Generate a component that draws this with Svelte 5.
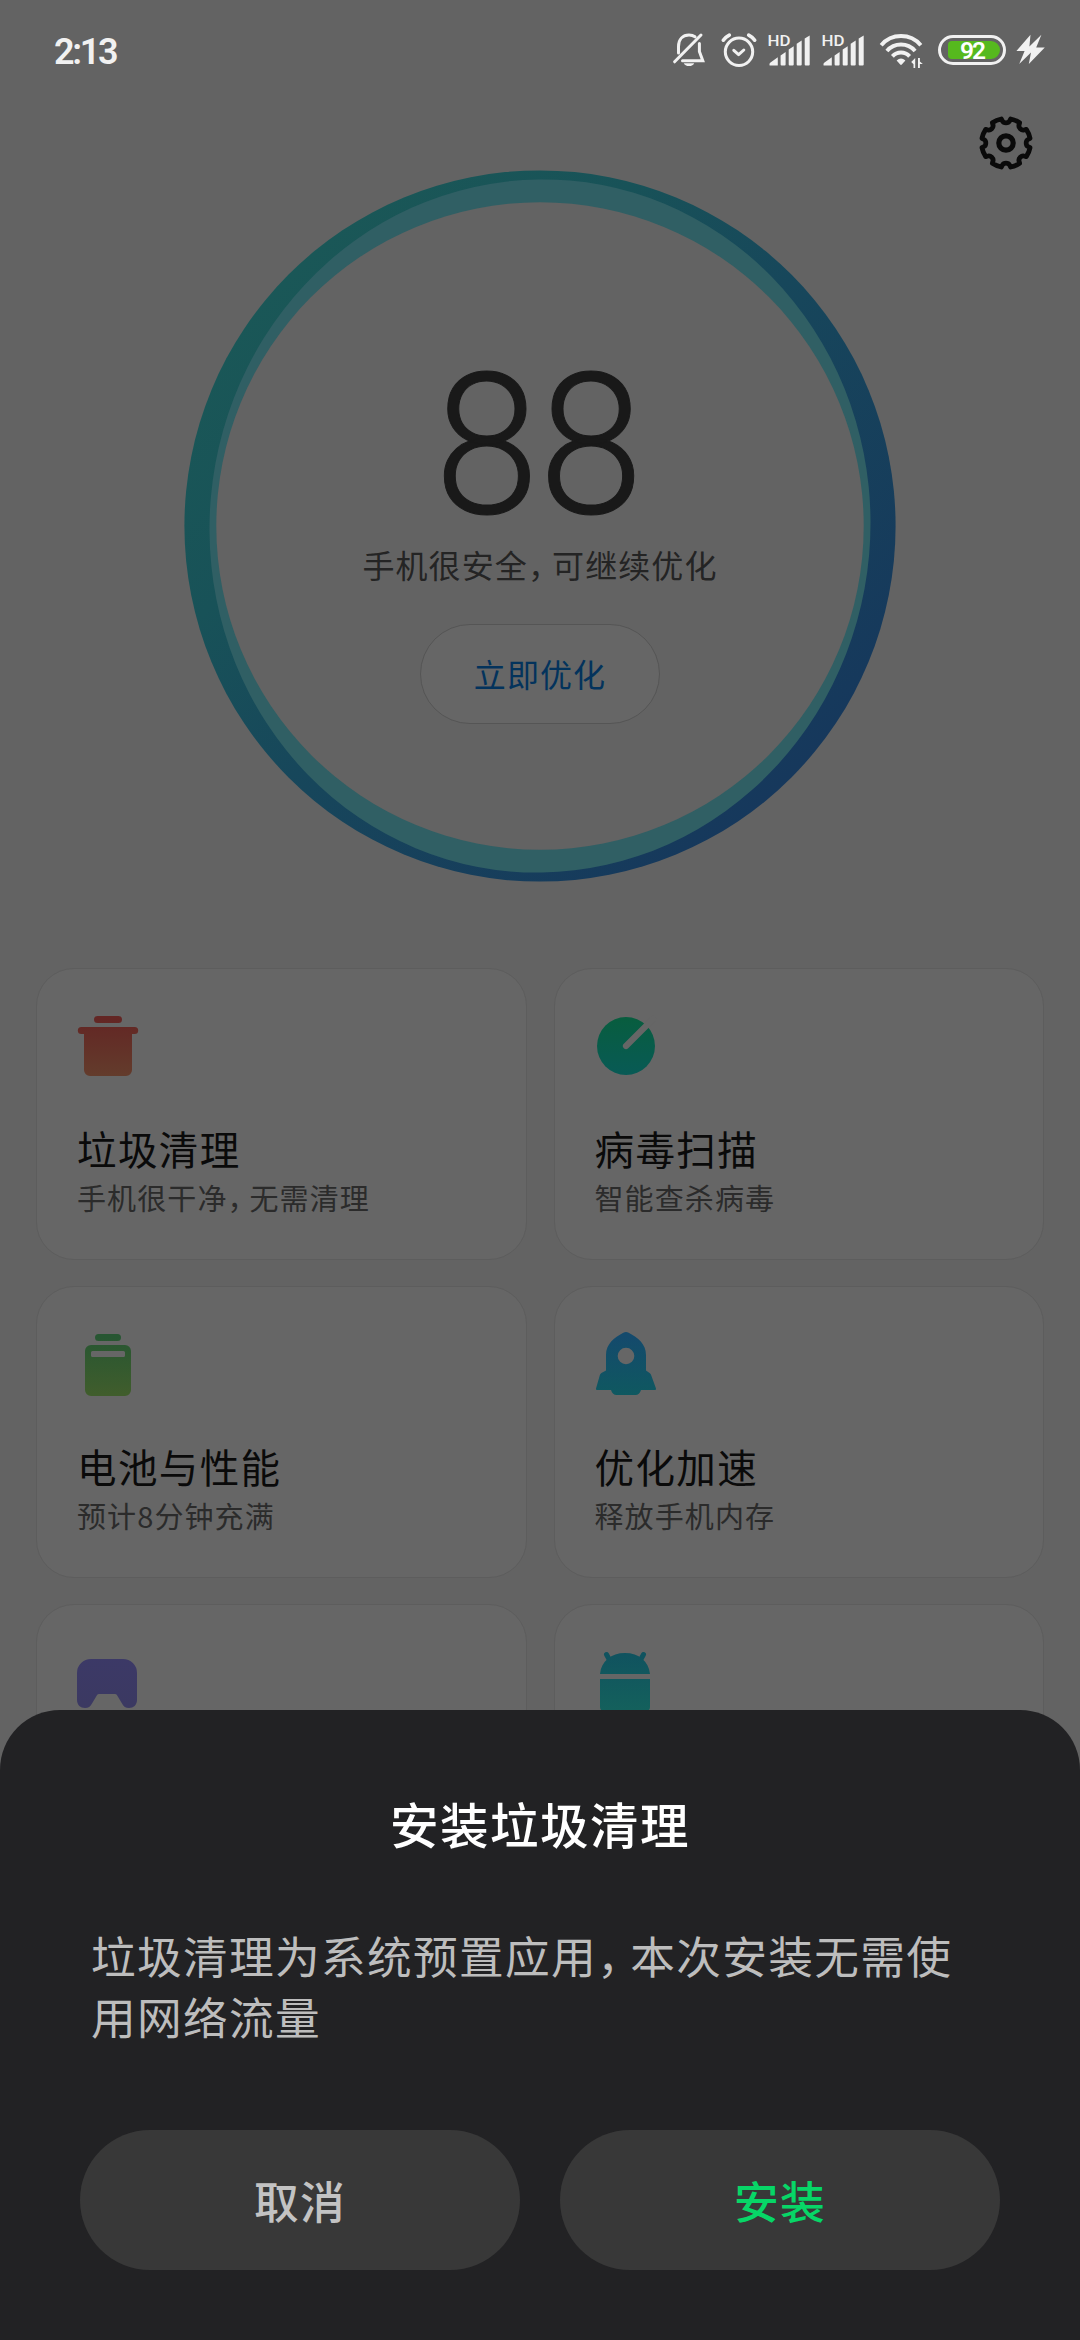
<script>
  const cards = [
    { icon: 'trash', title: '垃圾清理', note: '手机很干净\uFF0C无需清理' },
    { icon: 'scan', title: '病毒扫描', note: '智能查杀病毒' },
    { icon: 'battery', title: '电池与性能', note: '预计8分钟充满' },
    { icon: 'rocket', title: '优化加速', note: '释放手机内存' },
    { icon: 'game', title: '', note: '' },
    { icon: 'android', title: '', note: '' }
  ];

  const gradients = [
    ['trash', '#632624', '#633c2c'],
    ['scan', '#085d3f', '#085a56'],
    ['battery', '#275632', '#405d2c'],
    ['rocket', '#144a6c', '#0f5860'],
    ['game', '#3c3967', '#3b3961'],
    ['android', '#10535f', '#14615c']
  ];

  // Gear outline: eight arcs joined by small rounded notches.
  function gearPath() {
    const at = (deg, x, y) => {
      const a = (deg * Math.PI) / 180;
      const px = x * Math.cos(a) - y * Math.sin(a);
      const py = x * Math.sin(a) + y * Math.cos(a);
      return `${px.toFixed(2)} ${py.toFixed(2)}`;
    };
    let d = '';
    for (let i = 0; i < 8; i++) {
      const k = i * 45;
      d += i === 0 ? `M${at(k, -4.7, -24)}` : `A24.4 24.4 0 0 1 ${at(k, -4.7, -24)}`;
      d += `L${at(k, -3.5, -21.9)}Q${at(k, -2.6, -20.2)} ${at(k, 0, -20.2)}`;
      d += `Q${at(k, 2.6, -20.2)} ${at(k, 3.5, -21.9)}L${at(k, 4.7, -24)}`;
    }
    return d + `A24.4 24.4 0 0 1 ${at(0, -4.7, -24)}Z`;
  }
</script>

{#snippet phrase(text)}{#each text.split('\uFF0C') as part, i}{#if i}<span class="comma">{'\uFF0C'}</span>{/if}{part}{/each}{/snippet}

{#snippet signal()}
  <svg class="signal" width="44" height="36" viewBox="0 0 44 36">
    <text x="-0.5" y="14" textLength="23" lengthAdjust="spacingAndGlyphs">HD</text>
    <path d="M1.5 33.2V32Q1.5 31 2.5 30.5L9.8 25.2V33.2Q9.8 33.5 9.3 33.5H1.8Z" />
    <path d="M12.6 23.4L17.6 20V32.5Q17.6 33.5 16.6 33.5H13.6Q12.6 33.5 12.6 32.5Z" />
    <path d="M20.7 17.6L25.7 14.2V32.5Q25.7 33.5 24.7 33.5H21.7Q20.7 33.5 20.7 32.5Z" />
    <path d="M28.7 11.8L33.7 8.4V32.5Q33.7 33.5 32.7 33.5H29.7Q28.7 33.5 28.7 32.5Z" />
    <path d="M36.7 6.4L41.7 3.4V32.5Q41.7 33.5 40.7 33.5H37.7Q36.7 33.5 36.7 32.5Z" />
  </svg>
{/snippet}

<div class="screen">
  <svg class="defs" width="0" height="0" aria-hidden="true">
    <defs>
      {#each gradients as [id, from, to]}
        <linearGradient id={'g-' + id} x1="0" y1="0" x2="0" y2="68" gradientUnits="userSpaceOnUse">
          <stop offset="0.1" stop-color={from} />
          <stop offset="0.95" stop-color={to} />
        </linearGradient>
      {/each}
    </defs>
  </svg>

  <header class="status">
    <span class="time">2:13</span>
    <div class="tray">
      <svg width="36" height="38" viewBox="0 0 36 38">
        <g fill="none" stroke="#f1f1f1" stroke-width="3" stroke-linecap="round" stroke-linejoin="round">
          <path d="M3.6 30.8L30 4" />
          <path d="M7.5 22V15.5C7.5 8 12 4 18 4C20.4 4 22.4 4.6 24 5.8" />
          <path d="M28.4 12.5V20.5L31.8 29.8H11.5" stroke-linejoin="miter" />
        </g>
        <path d="M12.8 32.2H23.2Q22 35 18 35Q14 35 12.8 32.2Z" fill="#f1f1f1" />
      </svg>
      <svg class="alarm" width="38" height="38" viewBox="0 0 38 38">
        <g fill="none" stroke="#f1f1f1" stroke-width="3" stroke-linecap="round" stroke-linejoin="round">
          <circle cx="19" cy="20.8" r="13.7" />
          <path d="M3.3 9.2Q5.5 6 9.3 4.1M34.7 9.2Q32.5 6 28.7 4.1" stroke-width="3.6" />
          <path d="M13.8 19.3L18.6 23.6L23.8 19" />
        </g>
      </svg>
      {@render signal()}
      {@render signal()}
      <svg class="wifi" width="46" height="38" viewBox="0 0 46 38">
        <g fill="none" stroke="#f1f1f1" stroke-width="3.9">
          <path d="M2.2 14.2A26 26 0 0 1 41.8 14.2" />
          <path d="M7.9 19.9A18.6 18.6 0 0 1 36.1 19.9" />
          <path d="M13.4 25.4A11.5 11.5 0 0 1 30.6 25.4" />
        </g>
        <path d="M17.6 29.6Q22 25.6 26.4 29.6L22.8 33.6Q22 34.3 21.2 33.6Z" fill="#f1f1f1" />
        <path d="M36.2 27V37H34.5V33.2L32.2 31ZM39 37V27H40.9V30.6L43.8 33H40.9V37Z" fill="#f1f1f1" />
      </svg>
      <div class="battery"><div class="charge">92</div></div>
      <svg class="bolt" width="30" height="32" viewBox="0 0 30 32">
        <path d="M14.5 0.8L0.4 17H8.6L3.2 30L15 18.6L12.8 30L28.8 13.6H20.2L25.4 0.8L13.4 12.4Z" fill="#f1f1f1" />
      </svg>
    </div>
  </header>

  <div class="toolbar">
    <svg width="56" height="56" viewBox="-28 -28 56 56" fill="none" stroke="#0a0a0a">
      <path d={gearPath()} stroke-width="4.8" stroke-linejoin="round" />
      <circle r="7.2" stroke-width="5.2" />
    </svg>
  </div>

  <section class="score">
    <svg class="ring" width="712" height="712" viewBox="-356 -356 712 712">
      <linearGradient id="ring" x1="-250" y1="-250" x2="250" y2="250" gradientUnits="userSpaceOnUse">
        <stop offset="0" stop-color="#1a5757" />
        <stop offset="0.25" stop-color="#185258" />
        <stop offset="0.5" stop-color="#17475b" />
        <stop offset="1" stop-color="#16385c" />
      </linearGradient>
      <circle r="355.6" fill="url(#ring)" />
      <ellipse rx="330.4" ry="346.7" transform="rotate(5)" fill="#305f64" />
      <circle r="323.7" fill="#636363" />
    </svg>
    <div class="summary">
      <div class="number">88</div>
      <div class="state">{@render phrase('手机很安全\uFF0C可继续优化')}</div>
      <button class="optimize">立即优化</button>
    </div>
  </section>

  <main class="grid">
    {#each cards as card}
      <article class="card">
        <svg class="icon" width="62" height="70" viewBox="0 0 62 70" fill={`url(#g-${card.icon})`}>
          {#if card.icon === 'trash'}
            <path d="M20.5 4H41.5A3.5 3.5 0 0 1 41.5 11H20.5A3.5 3.5 0 0 1 20.5 4Z" />
            <path d="M4.3 15H57.7A3.5 3.5 0 0 1 57.7 22H55V58A6 6 0 0 1 49 64H13A6 6 0 0 1 7 58V22H4.3A3.5 3.5 0 0 1 4.3 15Z" />
          {:else if card.icon === 'scan'}
            <circle cx="31" cy="34" r="29" />
            <path d="M31 34L58 7" stroke="#666" stroke-width="6.2" stroke-linecap="round" />
          {:else if card.icon === 'battery'}
            <path d="M21.5 4H40.5A3.5 3.5 0 0 1 40.5 11H21.5A3.5 3.5 0 0 1 21.5 4Z" />
            <path fill-rule="evenodd" d="M14 15H48A6 6 0 0 1 54 21V60A6 6 0 0 1 48 66H14A6 6 0 0 1 8 60V21A6 6 0 0 1 14 15ZM15.5 21A1.5 1.5 0 0 0 14 22.5V25.5A1.5 1.5 0 0 0 15.5 27H46.5A1.5 1.5 0 0 0 48 25.5V22.5A1.5 1.5 0 0 0 46.5 21Z" />
          {:else if card.icon === 'rocket'}
            <path fill-rule="evenodd" d="M28.3 2.8Q31 1.4 33.7 2.8C43 7.8 51 14 51 25V40.4L54.6 43Q55.8 43.8 56.2 45.2L61 58.4Q61.4 60 59.8 60H46C45 63.4 43 65 40.5 65H21.5C19 65 17 63.4 16 60H2.2Q.6 60 1 58.4L4.8 45.2Q5.2 43.8 6.4 43L11 40.4V25C11 14 19 7.8 28.3 2.8ZM31 17.7A8.3 8.3 0 1 0 31 34.3A8.3 8.3 0 1 0 31 17.7Z" />
          {:else if card.icon === 'game'}
            <path d="M14 11H46A14 14 0 0 1 60 25V52C60 57 56.5 60 52 60C48.5 60 46.6 58.4 45 55.4L40.2 47.4Q39.4 46 37.8 46H22.2Q20.6 46 19.8 47.4L15 55.4C13.4 58.4 11.5 60 8 60C3.5 60 0 57 0 52V25A14 14 0 0 1 14 11Z" />
          {:else}
            <path d="M11.5 6.5L14.5 12M48.5 6.5L45.5 12" stroke="#10535f" stroke-width="5" stroke-linecap="round" />
            <path d="M5 26C6.4 13 16 5 30 5S53.6 13 55 26ZM5 31H55V59A4 4 0 0 1 51 63H9A4 4 0 0 1 5 59Z" />
          {/if}
        </svg>
        <h2>{card.title}</h2>
        <p>{@render phrase(card.note)}</p>
      </article>
    {/each}
  </main>

  <div class="sheet" role="dialog">
    <h1>安装垃圾清理</h1>
    <p class="message">{@render phrase('垃圾清理为系统预置应用\uFF0C本次安装无需使用网络流量')}</p>
    <div class="actions">
      <button>取消</button>
      <button class="confirm">安装</button>
    </div>
  </div>
</div>

<style>
  :global(body) {
    margin: 0;
    background: #636363;
  }
  .screen {
    position: relative;
    width: 1080px;
    height: 2340px;
    overflow: hidden;
    background: #636363;
    font-family: 'Noto Sans CJK SC', sans-serif;
    display: flex;
    flex-direction: column;
  }
  svg {
    display: block;
    flex: none;
  }
  .defs {
    position: absolute;
  }
  h1, h2, p {
    margin: 0;
    font-weight: 400;
  }
  button {
    font: inherit;
    border: 0;
    padding: 0;
  }
  .comma {
    font-feature-settings: 'halt';
    margin-right: 0.22em;
  }

  .status {
    height: 100px;
    box-sizing: border-box;
    padding: 0 34px 0 54px;
    display: flex;
    align-items: center;
    justify-content: space-between;
    color: #f1f1f1;
    font-family: Roboto, sans-serif;
  }
  .time {
    padding-top: 3px;
    font-size: 36px;
    font-weight: 600;
    letter-spacing: -2.3px;
    line-height: 40px;
  }
  .tray {
    display: flex;
    align-items: center;
  }
  .alarm {
    margin: 0 10px 0 13px;
  }
  .signal {
    margin-right: 10px;
    fill: #f1f1f1;
    font: 500 15.5px Roboto, sans-serif;
  }
  .wifi {
    margin-left: 3px;
  }
  .battery {
    box-sizing: border-box;
    width: 68px;
    height: 30px;
    margin: 0 10px 0 13px;
    border: 3px solid #f1f1f1;
    border-radius: 15px;
    padding: 3px 3px 3px 7px;
  }
  .charge {
    box-sizing: border-box;
    height: 18px;
    border-radius: 4px 9px 9px 4px;
    background: #56b91e;
    color: #fff;
    font-size: 24.5px;
    font-weight: 600;
    line-height: 20px;
    letter-spacing: -2px;
    text-align: center;
    padding-right: 4px;
  }

  .toolbar {
    height: 70px;
    box-sizing: border-box;
    padding: 15px 46px 0 0;
    display: flex;
    justify-content: flex-end;
  }

  .score {
    display: grid;
    justify-content: center;
    height: 712px;
  }
  .ring, .summary {
    grid-area: 1 / 1;
  }
  .summary {
    display: flex;
    flex-direction: column;
    align-items: center;
  }
  .number {
    margin-top: 196px;
    height: 160px;
    font: 300 196px/160px Roboto, sans-serif;
    color: #191919;
    -webkit-text-stroke: 1px #191919;
    padding-right: 2px;
    transform: scaleX(0.96);
  }
  .state {
    margin-top: 18px;
    font-size: 32px;
    line-height: 40px;
    letter-spacing: 1.1px;
    color: #242424;
    white-space: nowrap;
  }
  .optimize {
    margin-top: 40px;
    width: 240px;
    height: 100px;
    border: 1px solid #555;
    border-radius: 50px;
    background: #666;
    color: #03335c;
    font-size: 32px;
    line-height: 40px;
    letter-spacing: 1.1px;
    padding-bottom: 3px;
  }

  .grid {
    margin-top: 86px;
    padding: 0 36px;
    display: grid;
    grid-template-columns: 1fr 1fr;
    grid-auto-rows: 292px;
    gap: 26px 27px;
  }
  .card {
    box-sizing: border-box;
    border: 1px solid #5d5d5d;
    border-radius: 38px;
    background: #666;
    padding: 43px 0 0 40px;
  }
  .card h2 {
    margin-top: 42px;
    font-size: 39.5px;
    line-height: 48px;
    letter-spacing: 1.4px;
    height: 48px;
    color: #0a0a0a;
  }
  .card p {
    margin-top: 7px;
    font-size: 29px;
    line-height: 36px;
    letter-spacing: 1.1px;
    color: #2b2b2b;
  }

  .sheet {
    position: absolute;
    left: 0;
    right: 0;
    bottom: 0;
    height: 630px;
    box-sizing: border-box;
    padding: 83px 80px 70px;
    border-radius: 60px 60px 0 0;
    background: #222224;
    display: flex;
    flex-direction: column;
  }
  h1 {
    font-size: 48.5px;
    font-weight: 500;
    line-height: 60px;
    letter-spacing: 1.5px;
    text-align: center;
    color: #fff;
  }
  .message {
    margin-top: 71px;
    padding: 0 20px 0 11px;
    font-size: 44.7px;
    line-height: 61px;
    letter-spacing: 1.3px;
    color: #bdbdbd;
  }
  .actions {
    margin-top: auto;
    display: grid;
    grid-template-columns: 1fr 1fr;
    gap: 40px;
  }
  .actions button {
    height: 140px;
    border-radius: 70px;
    background: #383838;
    color: #c3c3c3;
    font-size: 44.7px;
    font-weight: 500;
    letter-spacing: 1.3px;
    padding-bottom: 2px;
  }
  .actions .confirm {
    color: #07d667;
  }
</style>
